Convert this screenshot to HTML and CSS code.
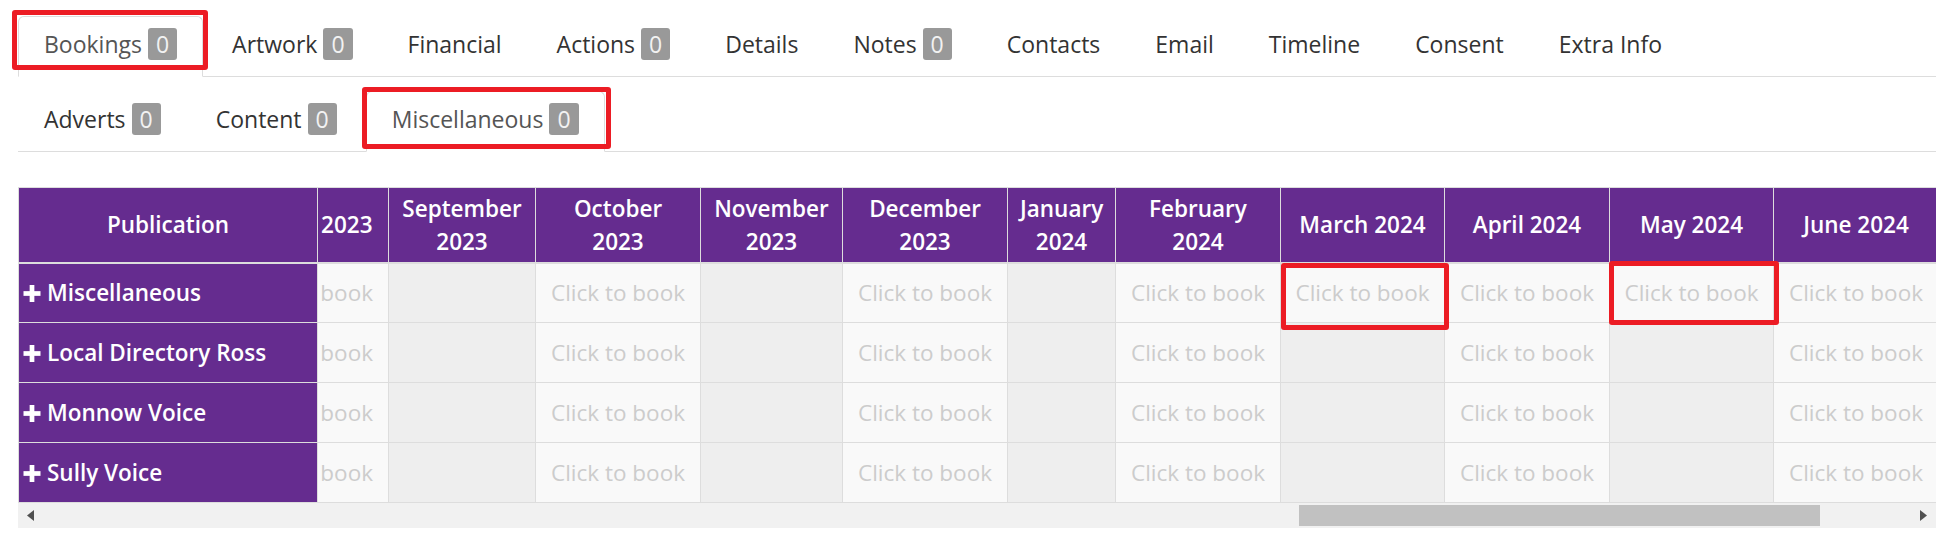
FILE: index.html
```html
<!DOCTYPE html>
<html lang="en">
<head>
<meta charset="utf-8">
<title>Bookings</title>
<link rel="stylesheet" href="styles.css">
</head>
<body>
<div class="page">
  <ul class="tabs tabs-main">
    <li class="tab active mark mark-main"><a href="#">Bookings <span class="badge">0</span></a></li>
    <li class="tab"><a href="#">Artwork <span class="badge">0</span></a></li>
    <li class="tab"><a href="#">Financial</a></li>
    <li class="tab"><a href="#">Actions <span class="badge">0</span></a></li>
    <li class="tab"><a href="#">Details</a></li>
    <li class="tab"><a href="#">Notes <span class="badge">0</span></a></li>
    <li class="tab"><a href="#">Contacts</a></li>
    <li class="tab"><a href="#">Email</a></li>
    <li class="tab"><a href="#">Timeline</a></li>
    <li class="tab"><a href="#">Consent</a></li>
    <li class="tab"><a href="#">Extra Info</a></li>
  </ul>
  <ul class="tabs tabs-sub">
    <li class="tab"><a href="#">Adverts <span class="badge">0</span></a></li>
    <li class="tab"><a href="#">Content <span class="badge">0</span></a></li>
    <li class="tab active mark mark-sub"><a href="#">Miscellaneous <span class="badge">0</span></a></li>
  </ul>

  <div class="grid-wrap">
    <div class="grid-view">
      <table class="bookings">
        <colgroup>
          <col class="w-pub">
          <col class="w-cut">
          <col class="w-sep">
          <col class="w-book">
          <col class="w-nov">
          <col class="w-book">
          <col class="w-jan">
          <col class="w-book">
          <col class="w-book2">
          <col class="w-book">
          <col class="w-book2">
          <col class="w-book">
        </colgroup>
        <thead>
          <tr>
            <th>Publication</th>
            <th class="cut"><div class="cut-box"><div class="cut-in">August 2023</div></div></th>
            <th>September<br>2023</th>
            <th>October<br>2023</th>
            <th>November<br>2023</th>
            <th>December<br>2023</th>
            <th>January<br>2024</th>
            <th>February<br>2024</th>
            <th>March 2024</th>
            <th>April 2024</th>
            <th>May 2024</th>
            <th>June 2024</th>
          </tr>
        </thead>
        <tbody>
          <tr>
            <td class="pub"><svg class="plus" viewBox="0 0 18 18" width="18" height="17"><rect x="6.5" y="0" width="5" height="18"/><rect x="0" y="6.5" width="18" height="5"/></svg>Miscellaneous</td>
            <td class="bk cut"><div class="cut-box"><div class="cut-in">Click to book</div></div></td>
            <td class="nb"></td>
            <td class="bk">Click to book</td>
            <td class="nb"></td>
            <td class="bk">Click to book</td>
            <td class="nb"></td>
            <td class="bk">Click to book</td>
            <td class="bk mark mark-cell1">Click to book</td>
            <td class="bk">Click to book</td>
            <td class="bk mark mark-cell2">Click to book</td>
            <td class="bk">Click to book</td>
          </tr>
          <tr>
            <td class="pub"><svg class="plus" viewBox="0 0 18 18" width="18" height="17"><rect x="6.5" y="0" width="5" height="18"/><rect x="0" y="6.5" width="18" height="5"/></svg>Local Directory Ross</td>
            <td class="bk cut"><div class="cut-box"><div class="cut-in">Click to book</div></div></td>
            <td class="nb"></td>
            <td class="bk">Click to book</td>
            <td class="nb"></td>
            <td class="bk">Click to book</td>
            <td class="nb"></td>
            <td class="bk">Click to book</td>
            <td class="nb"></td>
            <td class="bk">Click to book</td>
            <td class="nb"></td>
            <td class="bk">Click to book</td>
          </tr>
          <tr>
            <td class="pub"><svg class="plus" viewBox="0 0 18 18" width="18" height="17"><rect x="6.5" y="0" width="5" height="18"/><rect x="0" y="6.5" width="18" height="5"/></svg>Monnow Voice</td>
            <td class="bk cut"><div class="cut-box"><div class="cut-in">Click to book</div></div></td>
            <td class="nb"></td>
            <td class="bk">Click to book</td>
            <td class="nb"></td>
            <td class="bk">Click to book</td>
            <td class="nb"></td>
            <td class="bk">Click to book</td>
            <td class="nb"></td>
            <td class="bk">Click to book</td>
            <td class="nb"></td>
            <td class="bk">Click to book</td>
          </tr>
          <tr>
            <td class="pub"><svg class="plus" viewBox="0 0 18 18" width="18" height="17"><rect x="6.5" y="0" width="5" height="18"/><rect x="0" y="6.5" width="18" height="5"/></svg>Sully Voice</td>
            <td class="bk cut"><div class="cut-box"><div class="cut-in">Click to book</div></div></td>
            <td class="nb"></td>
            <td class="bk">Click to book</td>
            <td class="nb"></td>
            <td class="bk">Click to book</td>
            <td class="nb"></td>
            <td class="bk">Click to book</td>
            <td class="nb"></td>
            <td class="bk">Click to book</td>
            <td class="nb"></td>
            <td class="bk">Click to book</td>
          </tr>
        </tbody>
      </table>
    </div>
    <div class="hscroll">
      <div class="sb-btn"><svg viewBox="0 0 7 11" width="7" height="11"><polygon points="7,0 7,11 0,5.5"/></svg></div>
      <div class="sb-track"><div class="sb-thumb"></div></div>
      <div class="sb-btn"><svg viewBox="0 0 7 11" width="7" height="11"><polygon points="0,0 7,5.5 0,11"/></svg></div>
    </div>
  </div>
</div>
</body>
</html>
```

FILE: styles.css
```css
* {
  box-sizing: border-box;
}

body {
  margin: 0;
  background: #fff;
  color: #333;
  font-family: "Open Sans", "Liberation Sans", sans-serif;
  font-size: 22.5px;
}

.page {
  padding: 16px 20px 0 18px;
}

/* ---------- tabs ---------- */
.tabs {
  display: flex;
  list-style: none;
  margin: 0;
  padding: 0;
  border-bottom: 1px solid #ddd;
  font-size: 23px;
}

.tabs-sub {
  margin-top: 14px;
}

.tab {
  position: relative;
  margin-right: 3px;
  margin-bottom: -1px;
}

.tab a {
  display: block;
  padding: 11px 25px 16px;
  line-height: 32px;
  border: 1px solid transparent;
  border-radius: 6px 6px 0 0;
  color: #333;
  text-decoration: none;
  white-space: nowrap;
}

.tab.active a {
  color: #555;
  background: #fff;
  border-color: #ddd #ddd transparent;
}

.badge {
  display: inline-block;
  height: 32px;
  padding: 0 8px;
  line-height: 32px;
  vertical-align: top;
  background: #999;
  color: #f2f2f2;
  border-radius: 3px;
}

/* ---------- annotation boxes ---------- */
.mark {
  position: relative;
}

.mark::after {
  content: "";
  position: absolute;
  border: 5px solid #ec1c24;
  border-radius: 3px;
  pointer-events: none;
}

.mark-main::after {
  left: -6px;
  right: -5px;
  top: -6px;
  bottom: 7px;
}

.mark-sub::after {
  left: -4px;
  right: -6px;
  top: -4px;
  bottom: 3px;
}

.mark-cell1::after {
  left: 0;
  right: -5px;
  top: -1px;
  bottom: -8px;
}

.mark-cell2::after {
  left: -1px;
  right: -6px;
  top: -3px;
  bottom: -3px;
}

/* ---------- bookings grid ---------- */
.grid-wrap {
  margin-top: 35px;
}

.grid-view {
  overflow: hidden;
}

.bookings {
  width: 1920px;
  table-layout: fixed;
  border-collapse: collapse;
  border: 1px solid #ddd;
}

.w-pub { width: 299px; }
.w-cut { width: 71px; }
.w-sep { width: 147px; }
.w-nov { width: 142px; }
.w-jan { width: 108px; }
.w-book { width: 165px; }
.w-book2 { width: 164px; }

.bookings th,
.bookings td {
  border: 1px solid #ddd;
  padding: 0 12px;
  white-space: nowrap;
}

.bookings th {
  height: 75px;
  background: #652c8f;
  color: #fff;
  font-weight: 600;
  line-height: 33px;
  text-align: center;
  vertical-align: middle;
  border-bottom-width: 2px;
}

.bookings td {
  height: 60px;
  line-height: 32px;
  text-align: center;
  vertical-align: middle;
}

.bookings td.pub {
  padding: 0 4px;
  background: #652c8f;
  color: #fff;
  font-weight: 600;
  text-align: left;
}

.plus {
  fill: #fff;
  margin-right: 6px;
  vertical-align: -1px;
}

.bookings td.bk {
  background: #f9f9f9;
  color: #ccc;
}

.bookings td.nb {
  background: #eee;
}

.bookings .cut {
  padding: 0;
}

.cut-box {
  display: flex;
  justify-content: flex-end;
  overflow: hidden;
}

.cut-in {
  flex: none;
  width: 164px;
  padding: 0 12px;
  text-align: center;
}

/* ---------- horizontal scrollbar ---------- */
.hscroll {
  display: flex;
  height: 25px;
  background: #f1f1f1;
}

.sb-btn {
  flex: none;
  width: 25px;
  display: flex;
  align-items: center;
  justify-content: center;
  fill: #505050;
}

.sb-track {
  flex: 1;
  padding: 2px 0;
}

.sb-thumb {
  width: 521px;
  height: 100%;
  margin-left: 1256px;
  background: #c1c1c1;
}
```
